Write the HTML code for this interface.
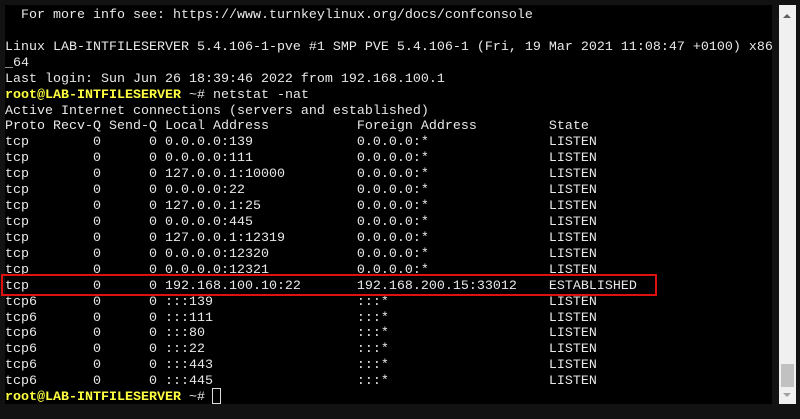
<!DOCTYPE html>
<html><head><meta charset="utf-8"><style>
html,body{margin:0;padding:0;background:#121212;width:800px;height:419px;overflow:hidden}
#term{position:absolute;left:5px;top:5px;width:767px;height:399px;background:#000;overflow:hidden}
pre{margin:0;position:absolute;left:0;top:3px;font-family:"Liberation Mono",monospace;font-size:13.33px;line-height:15.92px;color:#e8e8e8;white-space:pre}
.y{color:#ffff40;font-weight:bold}
#sb{position:absolute;left:779px;top:5px;width:17px;height:399px;background:#f0f0f0}
#thumb{position:absolute;left:2px;top:359px;width:13px;height:23px;background:#c1c1c1}
.up{position:absolute;left:4px;top:9px;width:0;height:0;border-left:4px solid transparent;border-right:4px solid transparent;border-bottom:4px solid #606060}
.dn{position:absolute;left:4px;top:388px;width:0;height:0;border-left:4px solid transparent;border-right:4px solid transparent;border-top:4px solid #a0a0a0}
#box{position:absolute;left:1px;top:274px;width:652px;height:18px;border:2px solid #e01010}
#cur{position:absolute;left:212px;top:388px;width:7px;height:14px;border:1px solid #ddd}
</style></head><body>
<div id="term"><pre>  For more info see: https://www.turnkeylinux.org/docs/confconsole

Linux LAB-INTFILESERVER 5.4.106-1-pve #1 SMP PVE 5.4.106-1 (Fri, 19 Mar 2021 11:08:47 +0100) x86
_64
Last login: Sun Jun 26 18:39:46 2022 from 192.168.100.1
<span class="y">root@LAB-INTFILESERVER</span> ~# netstat -nat
Active Internet connections (servers and established)
Proto Recv-Q Send-Q Local Address           Foreign Address         State
tcp        0      0 0.0.0.0:139             0.0.0.0:*               LISTEN
tcp        0      0 0.0.0.0:111             0.0.0.0:*               LISTEN
tcp        0      0 127.0.0.1:10000         0.0.0.0:*               LISTEN
tcp        0      0 0.0.0.0:22              0.0.0.0:*               LISTEN
tcp        0      0 127.0.0.1:25            0.0.0.0:*               LISTEN
tcp        0      0 0.0.0.0:445             0.0.0.0:*               LISTEN
tcp        0      0 127.0.0.1:12319         0.0.0.0:*               LISTEN
tcp        0      0 0.0.0.0:12320           0.0.0.0:*               LISTEN
tcp        0      0 0.0.0.0:12321           0.0.0.0:*               LISTEN
tcp        0      0 192.168.100.10:22       192.168.200.15:33012    ESTABLISHED
tcp6       0      0 :::139                  :::*                    LISTEN
tcp6       0      0 :::111                  :::*                    LISTEN
tcp6       0      0 :::80                   :::*                    LISTEN
tcp6       0      0 :::22                   :::*                    LISTEN
tcp6       0      0 :::443                  :::*                    LISTEN
tcp6       0      0 :::445                  :::*                    LISTEN
<span class="y">root@LAB-INTFILESERVER</span> ~# </pre></div>
<div id="box"></div>
<div id="cur"></div>
<div id="sb"><div class="up"></div><div id="thumb"></div><div class="dn"></div></div>
</body></html>
